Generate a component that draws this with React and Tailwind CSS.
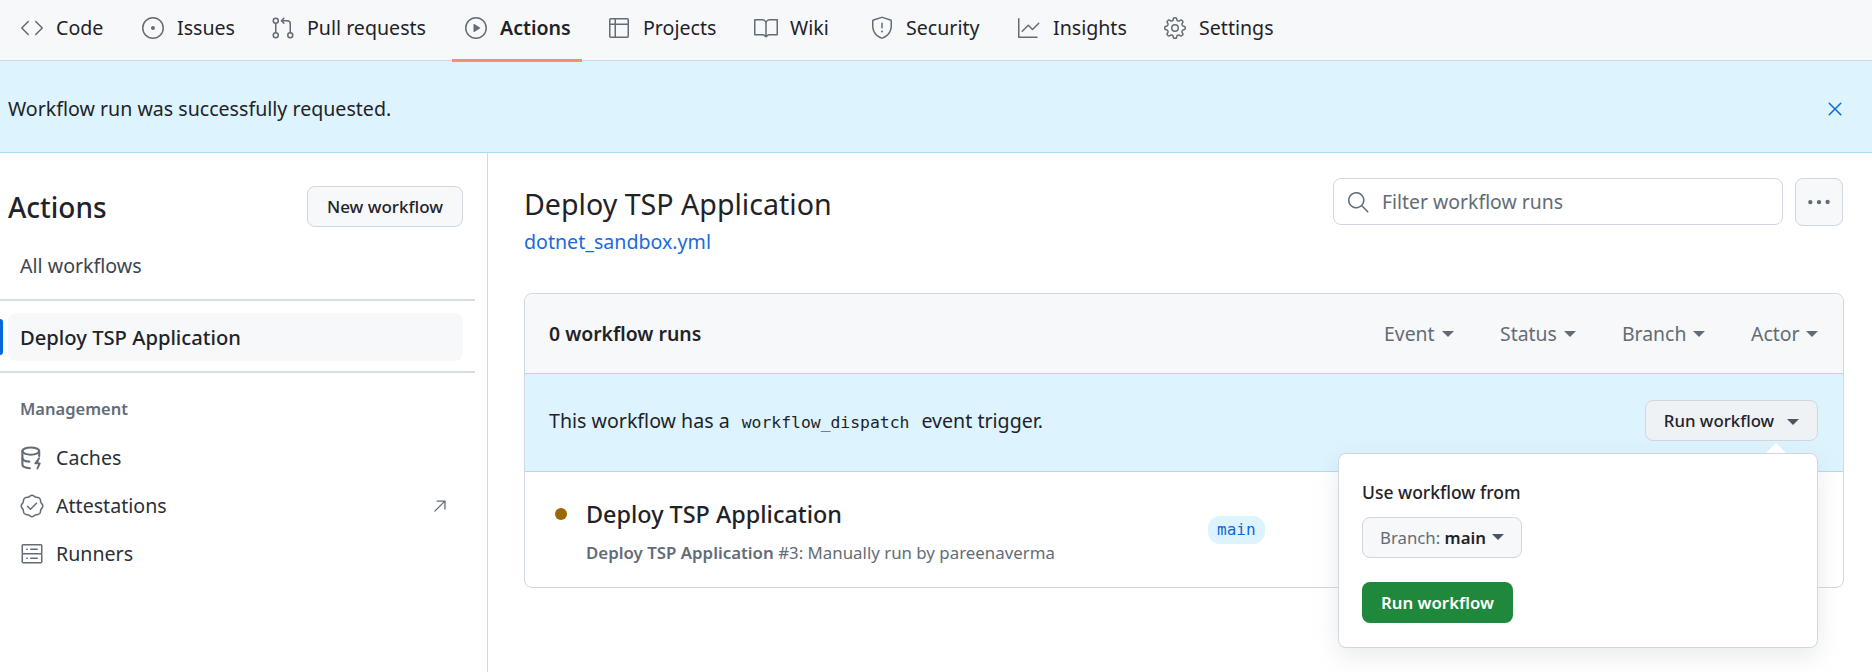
import React from "react";
import { GoCode, GoIssueOpened, GoGitPullRequest, GoPlay, GoTable, GoBook, GoShield, GoGraph, GoGear, GoVerified, GoServer, GoArrowUpRight, GoKebabHorizontal, GoSearch, GoX } from "react-icons/go";

const tabs = [
  [GoCode, "Code", "w-[108px]"],
  [GoIssueOpened, "Issues", "w-[117px]"],
  [GoGitPullRequest, "Pull requests", "w-[180px]"],
  [GoPlay, "Actions", "w-[130px]", true],
  [GoTable, "Projects", "w-[134px]"],
  [GoBook, "Wiki", "w-[103px]"],
  [GoShield, "Security", "w-[134px]"],
  [GoGraph, "Insights", "w-[133px]"],
  [GoGear, "Settings", "w-[136px]"],
];

function GoCacheIcon({ className = "", size = 24 }) {
  return (
    <svg className={className} width={size} height={size} viewBox="0 0 16 16" fill="none" stroke="currentColor" strokeWidth="1.4" strokeLinecap="round" strokeLinejoin="round">
      <ellipse cx="7.2" cy="3.4" rx="5.6" ry="2.4" />
      <path d="M1.6 3.4v9c0 1.3 2.2 2.3 5 2.4" />
      <path d="M1.6 8c0 1.2 1.9 2.2 4.6 2.4" />
      <path d="M12.8 3.4v3.2" />
      <path d="M12.8 8.2l-2.6 3.4h3l-1.6 3.4" fill="currentColor" strokeWidth="1.2" />
    </svg>
  );
}

function Caret({ className = "" }) {
  return <span className={"inline-block w-0 h-0 border-x-[6px] border-x-transparent border-t-[6px] border-t-current " + className} />;
}

function Tab({ Icon, label, width, active }) {
  return (
    <a className={"relative flex items-center h-full pl-3 pb-[4px] gap-3 text-[19.6px] text-[#1f2328] " + width + (active ? " font-semibold" : "")}>
      <Icon className="text-[#636c76] shrink-0" size={24} />
      <span>{label}</span>
      {active && <span className="absolute left-0 right-0 -bottom-[2px] h-[3px] bg-[#fd8c73]" />}
    </a>
  );
}

function Filter({ label, width }) {
  return (
    <span className={"flex items-center gap-[7px] text-[19.4px] text-[#636c76] " + width}>
      {label}
      <Caret className="mt-[2px]" />
    </span>
  );
}

function SideLink({ Icon, label, extra }) {
  return (
    <div className="flex items-center h-[48px] pl-5 pr-[37px] gap-3 text-[19.6px] text-[#2a3038]">
      <Icon className="text-[#636c76] shrink-0" size={24} />
      <span className="flex-1">{label}</span>
      {extra}
    </div>
  );
}

export default function App() {
  return (
    <div className="w-[1872px] h-[672px] overflow-hidden bg-white text-[#1f2328] font-['Noto_Sans','Open_Sans',sans-serif]">
      <nav className="flex items-center h-[61px] pl-2 gap-[13px] bg-[#f6f8fa] border-b border-[#d0d7de]">
        {tabs.map(([Icon, label, width, active]) => (
          <Tab key={label} Icon={Icon} label={label} width={width} active={active} />
        ))}
      </nav>

      <div className="flex items-center justify-between h-[92px] pt-1 pl-2 pr-[25px] bg-[#ddf4ff] border-b border-[#a9dcfb] text-[19.6px]">
        <span>Workflow run was successfully requested.</span>
        <GoX className="text-[#0969da]" size={24} />
      </div>

      <div className="flex h-[519px]">
        <aside className="w-[488px] shrink-0 border-r border-[#d0d7de] pt-[33px]">
          <div className="flex items-center justify-between pl-2 pr-[24px] h-[41px]">
            <h1 className="text-[28px] font-medium">Actions</h1>
            <button className="w-[156px] h-[41px] rounded-lg border border-[#d0d7de] bg-[#f6f8fa] text-[17px] font-medium">New workflow</button>
          </div>
          <div className="flex items-center pl-5 h-[48px] mt-[15px] text-[19.6px] text-[#3d444d]">All workflows</div>
          <div className="w-[475px] h-[2px] bg-[#d8dee4] mt-[9px]" />
          <div className="relative mt-[12px] ml-2 w-[455px] h-[48px] rounded-lg bg-[#f6f8fa] flex items-center pl-3 text-[20.2px] font-medium">
            Deploy TSP Application
            <span className="absolute -left-2 top-[6px] w-[3px] h-[36px] rounded-r bg-[#0969da]" />
          </div>
          <div className="w-[475px] h-[2px] bg-[#d8dee4] mt-[10px]" />
          <div className="pl-5 mt-[24px] h-[24px] flex items-center text-[16.5px] font-semibold text-[#636c76]">Management</div>
          <div className="mt-[13px]">
            <SideLink Icon={GoCacheIcon} label="Caches" />
            <SideLink Icon={GoVerified} label="Attestations" extra={<GoArrowUpRight className="text-[#636c76]" size={21} />} />
            <SideLink Icon={GoServer} label="Runners" />
          </div>
        </aside>

        <main className="flex-1 pl-9 pr-7 pt-[25px]">
          <div className="flex justify-between items-start h-[115px]">
            <div>
              <h2 className="text-[28.6px] leading-[52px]">Deploy TSP Application</h2>
              <a className="block text-[19.6px] leading-[24px] text-[#1a6ae0]">dotnet_sandbox.yml</a>
            </div>
            <div className="flex gap-3 mr-px">
              <div className="flex items-center w-[450px] h-[47px] rounded-lg border border-[#d0d7de] px-3 gap-3 text-[19.4px] text-[#636c76]">
                <GoSearch size={24} />
                <span>Filter workflow runs</span>
              </div>
              <button className="flex items-center justify-center w-[48px] h-[48px] rounded-lg border border-[#d0d7de] bg-[#f6f8fa] text-[#636c76]">
                <GoKebabHorizontal size={26} />
              </button>
            </div>
          </div>

          <section className="border border-[#d0d7de] rounded-lg">
            <header className="flex items-center justify-between h-[79px] pl-6 pr-6 bg-[#f6f8fa] rounded-t-lg">
              <strong className="text-[19.4px] font-semibold">0 workflow runs</strong>
              <div className="flex">
                <Filter label="Event" width="w-[116px]" />
                <Filter label="Status" width="w-[122px]" />
                <Filter label="Branch" width="w-[129px]" />
                <Filter label="Actor" width="w-[68px]" />
              </div>
            </header>
            <div className="relative flex items-center justify-between h-[99px] pl-6 pr-[25px] pb-1 bg-[#ddf4ff] border-y border-[#a9dcfb] text-[19.6px]">
              <span>This workflow has a<code className="mx-3 font-['DejaVu_Sans_Mono',monospace] text-[16.4px]">workflow_dispatch</code>event trigger.</span>
              <button className="flex items-center justify-center gap-[13px] w-[173px] h-[41px] rounded-lg border border-[#d0d7de] bg-[#eff2f5] text-[16.8px] font-medium">
                Run workflow
                <Caret className="mt-[2px] text-[#4b5563]" />
              </button>
              <div className="absolute right-[25px] top-[79px] w-[480px] h-[195px] rounded-lg border border-[#d0d7de] bg-white shadow-[0_8px_24px_rgba(140,149,159,0.2)] px-[23px] pt-[26px] z-10">
                <span className="absolute right-[31px] -top-[11px] w-0 h-0 border-x-[10px] border-x-transparent border-b-[10px] border-b-white" />
                <div className="text-[17.5px] leading-[24px] font-medium">Use workflow from</div>
                <button className="flex items-center justify-center gap-[6px] mt-[13px] w-[160px] h-[41px] rounded-lg border border-[#d0d7de] bg-[#f6f8fa] text-[16.8px]">
                  <span className="text-[#636c76]">Branch: <span className="font-semibold text-[#1f2328]">main</span></span>
                  <Caret className="text-[#4b5563] -mt-[2px]" />
                </button>
                <button className="block mt-[24px] w-[151px] h-[41px] rounded-lg bg-[#1f883d] text-white text-[16.8px] font-semibold">Run workflow</button>
              </div>
            </div>
            <div className="flex h-[115px] pl-[30px]">
              <span className="mt-[36px] w-3 h-3 rounded-full bg-[#9a6700] shrink-0" />
              <div className="ml-[19px] w-[622px] pt-[26px]">
                <div className="text-[23.4px] leading-[32px] font-medium">Deploy TSP Application</div>
                <div className="text-[16.85px] leading-[24px] mt-[11px] text-[#636c76]"><span className="font-semibold">Deploy TSP Application</span> #3: Manually run by pareenaverma</div>
              </div>
              <span className="mt-[44px] h-[28px] px-[9px] rounded-xl bg-[#ddf4ff] text-[#0969da] font-['DejaVu_Sans_Mono',monospace] text-[16px] leading-[28px]">main</span>
            </div>
          </section>
        </main>
      </div>
    </div>
  );
}
